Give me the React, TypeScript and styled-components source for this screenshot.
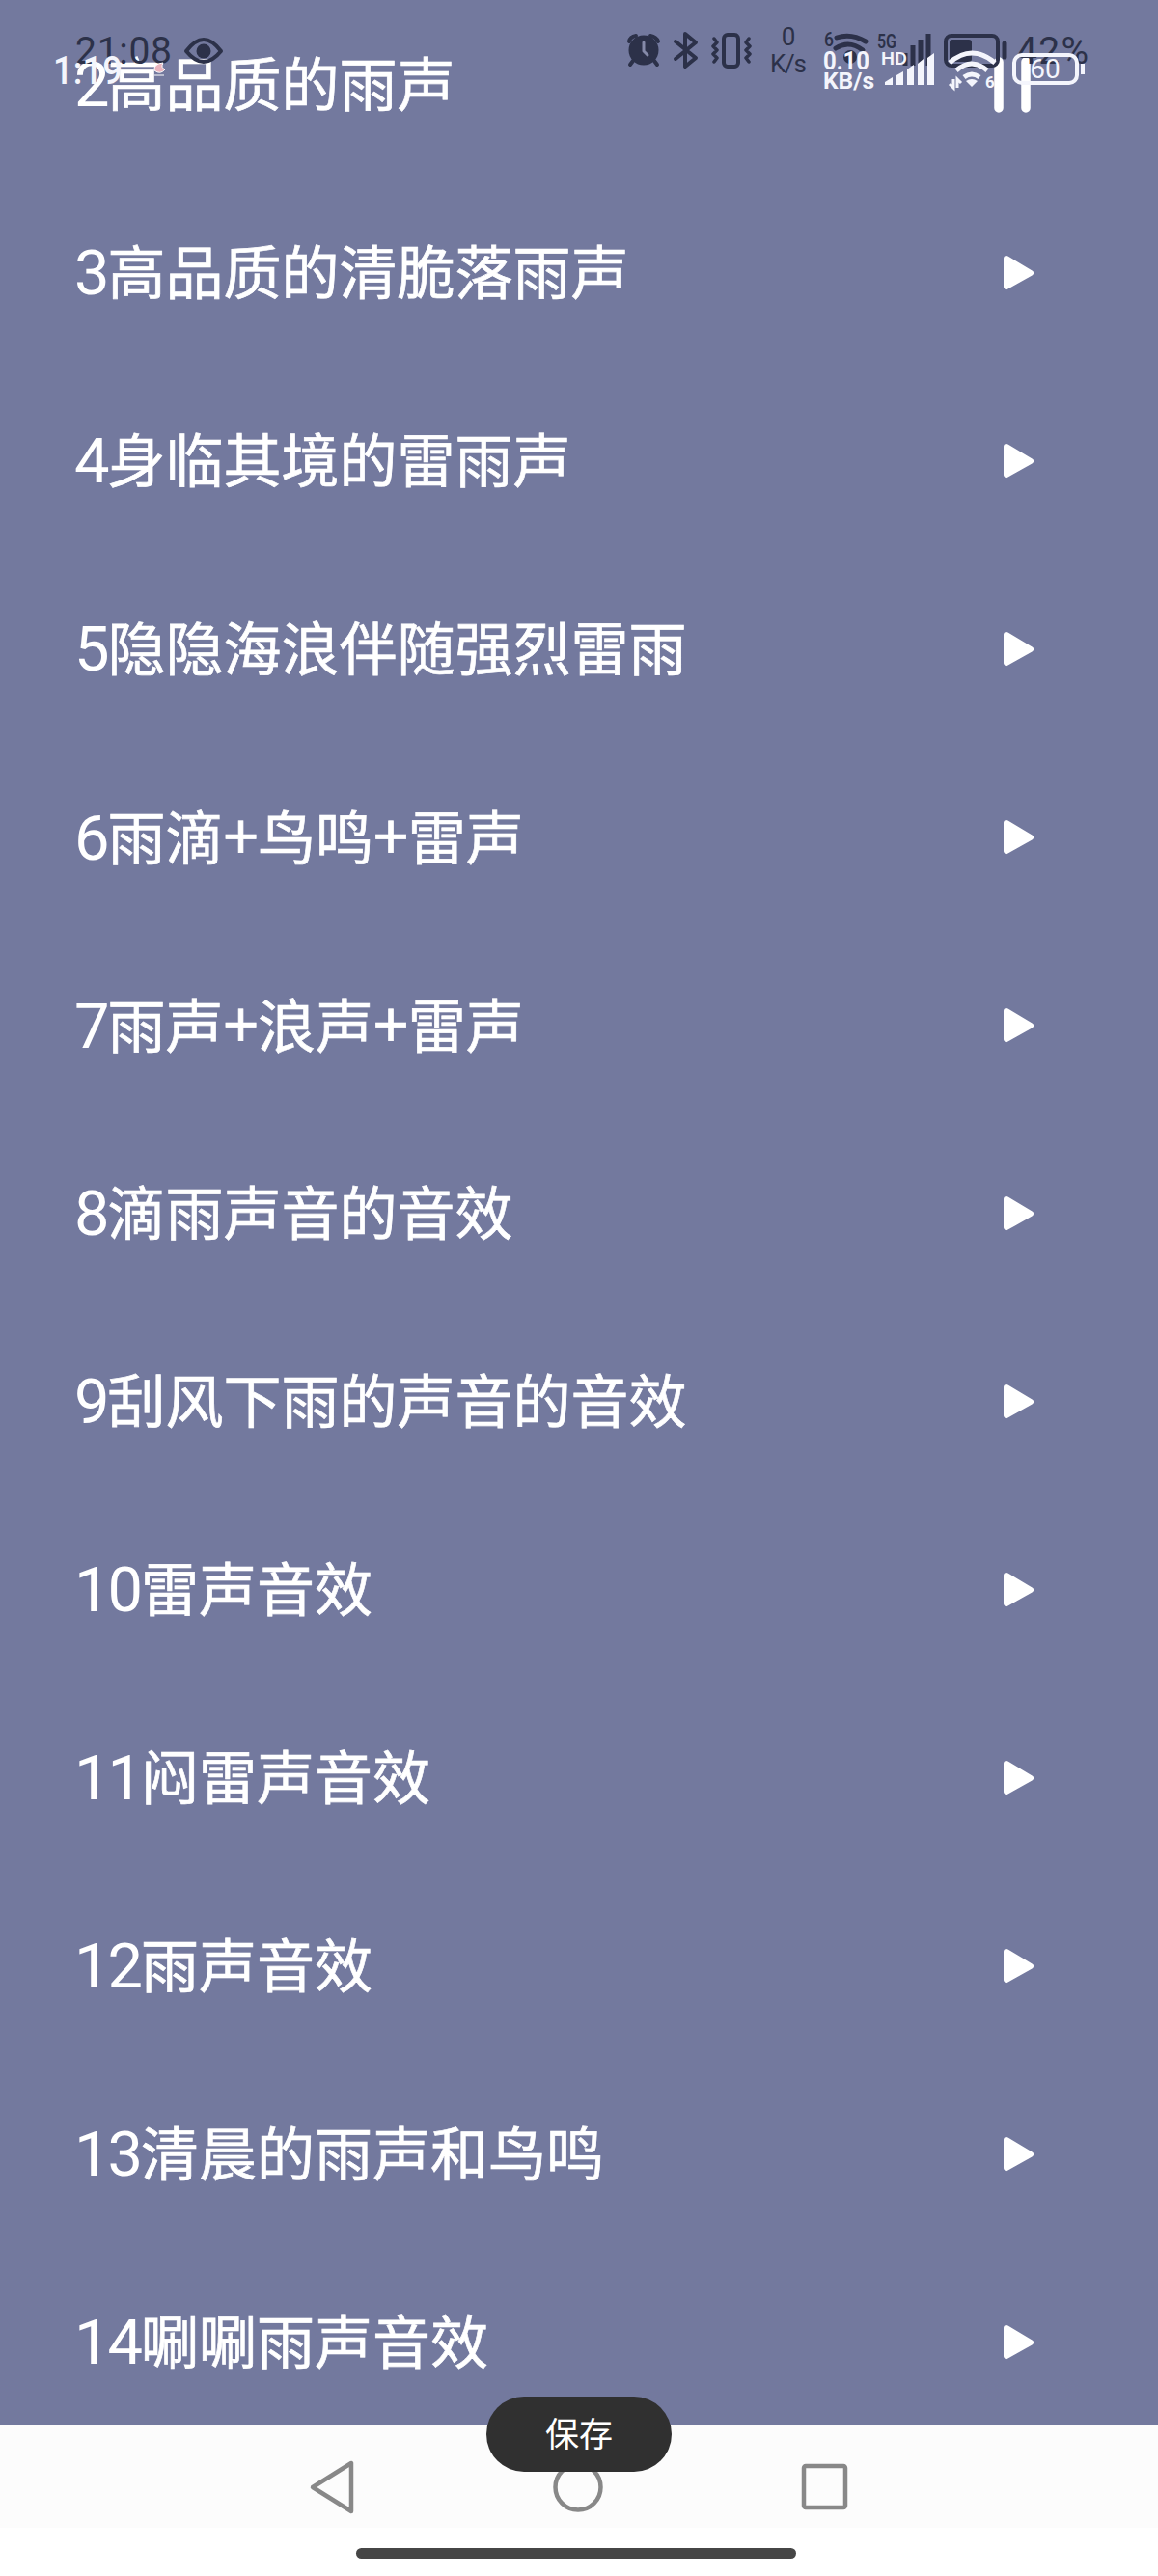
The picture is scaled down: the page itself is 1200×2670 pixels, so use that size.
import React from 'react';
import styled, { createGlobalStyle } from 'styled-components';

const Global = createGlobalStyle`
  * { box-sizing: border-box; }
  body { margin: 0; background: #fff; }
`;

const Screen = styled.div`
  position: relative;
  width: 1200px;
  height: 2670px;
  display: flex;
  flex-direction: column;
  overflow: hidden;
  background: #fff;
  font-family: Roboto, 'Noto Sans CJK SC', sans-serif;
`;

const ListPane = styled.main`
  height: 2513px;
  flex: none;
  overflow: hidden;
  background: #73799e;
`;

const Tracks = styled.ul`
  list-style: none;
  padding: 0;
  margin: -10px 0 0;
`;

const Track = styled.li`
  height: 195px;
  padding: 0 126px 0 77px;
  display: flex;
  align-items: center;
  justify-content: space-between;
  color: #fff;
`;

const Title = styled.span`
  font: 400 60px/90px 'Noto Sans CJK SC', sans-serif;
  padding-bottom: 4px;
  white-space: nowrap;
  -webkit-text-stroke: 0.7px #fff;
`;

const Digits = styled.span`
  font: 400 65px/90px Roboto, sans-serif;
  letter-spacing: -2px;
  -webkit-text-stroke: 0;
`;

const Plus = styled.span`
  font: 400 65px/90px 'Noto Sans CJK SC', sans-serif;
  letter-spacing: -0.5px;
`;

const StatusLayer = styled.svg`
  position: absolute;
  left: 0;
  top: 0;
`;

const NavBar = styled.nav`
  height: 107px;
  flex: none;
  display: flex;
  align-items: center;
  justify-content: space-between;
  padding: 23px 320px 0 320px;
  background: #fcfcfc;
`;

const HomeArea = styled.div`
  flex: 1;
  display: flex;
  justify-content: center;
  padding: 21px 6px 0 0;
`;

const HomeIndicator = styled.div`
  width: 456px;
  height: 11px;
  border-radius: 6px;
  background: #464646;
`;

const SaveToast = styled.button`
  position: absolute;
  left: 504px;
  top: 2484px;
  width: 192px;
  height: 78px;
  border: 0;
  padding: 0 0 4px;
  border-radius: 39px;
  background: #303030;
  color: #fff;
  font: 400 35px/50px 'Noto Sans CJK SC', sans-serif;
`;

const tracks = [
  '2高品质的雨声',
  '3高品质的清脆落雨声',
  '4身临其境的雷雨声',
  '5隐隐海浪伴随强烈雷雨',
  '6雨滴+鸟鸣+雷声',
  '7雨声+浪声+雷声',
  '8滴雨声音的音效',
  '9刮风下雨的声音的音效',
  '10雷声音效',
  '11闷雷声音效',
  '12雨声音效',
  '13清晨的雨声和鸟鸣',
  '14唰唰雨声音效',
];

const TrackTitle = ({ text }: { text: string }) => (
  <Title>
    {text.split(/([0-9]+|\+)/).filter(Boolean).map((part, i) => {
      if (part === '+') return <Plus key={i}>+</Plus>;
      return /^[0-9]/.test(part) ? <Digits key={i}>{part}</Digits> : part;
    })}
  </Title>
);

const PlayIcon = () => (
  <svg width="36" height="40" viewBox="0 0 36 40">
    <path d="M5 5 L30 20 L5 34Z" fill="#fff" stroke="#fff" strokeWidth="6" strokeLinejoin="round" />
  </svg>
);

const PauseIcon = () => (
  <svg width="44" height="58" viewBox="0 0 44 58">
    <path d="M5 5V53M33 5V53" stroke="#fff" strokeWidth="9.5" strokeLinecap="round" />
  </svg>
);

const dark = '#2c3149';
const light = '#f4f5fc';

const StatusIcons = () => (
  <StatusLayer width="1200" height="130" viewBox="0 0 1200 130" fill="none">
    <g fontFamily="Roboto, sans-serif" fill={dark}>
      <text x="78" y="66" fontSize="39" textLength="100">21:08</text>
      <text x="817" y="47" fontSize="26" textAnchor="middle">0</text>
      <text x="817" y="75" fontSize="26" textAnchor="middle" textLength="38">K/s</text>
      <text x="854" y="48" fontSize="21" fontWeight="500" textLength="10" lengthAdjust="spacingAndGlyphs">6</text>
      <text x="909" y="50" fontSize="21" fontWeight="600" textLength="20" lengthAdjust="spacingAndGlyphs">5G</text>
      <text x="1053" y="66" fontSize="39" textLength="75">42%</text>
    </g>
    <g stroke={dark} strokeWidth="4" strokeLinecap="round" strokeLinejoin="round">
      <path d="M193 53Q211 29 229 53Q211 75 193 53Z" />
      <circle cx="211" cy="53" r="7.5" fill={dark} stroke="none" />
      <circle cx="667" cy="52" r="15.5" fill={dark} stroke="none" />
      <path d="M652 43Q653 38 659 37M682 43Q680 38 674 37M656 63L653 67M678 63L681 67" />
      <path d="M667 44V53L671 57" stroke="#858aa9" strokeWidth="3" />
      <path d="M700 43L721 60L710 69V35L721 44L700 61" />
      <rect x="750" y="36" width="15" height="33" rx="4" />
      <path d="M740 40L743 44L739 48L743 52L739 56L743 60L740 64M776 40L773 44L777 48L773 52L777 56L773 60L776 64" strokeWidth="3.5" />
      <path d="M867 39Q882 34 897 43M866 50Q880 41 894 52" strokeWidth="5" />
      <circle cx="881" cy="59" r="7" fill={dark} stroke="none" />
      <path d="M938 68V55M946 68V47M954 68V41M962 68V35" strokeWidth="5" strokeLinecap="butt" />
      <rect x="980" y="37" width="54" height="31" rx="6" />
      <path d="M1041 45V59" strokeWidth="5" />
      <rect x="984" y="41" width="23" height="23" rx="3" fill={dark} stroke="none" />
    </g>
    <g fontFamily="Roboto, sans-serif" fill={light}>
      <text x="55" y="87" fontSize="41" fontWeight="500" textLength="72" lengthAdjust="spacingAndGlyphs">1:19</text>
      <text x="853" y="72" fontSize="25" fontWeight="700" textLength="48" lengthAdjust="spacingAndGlyphs">0.10</text>
      <text x="853" y="92" fontSize="24" fontWeight="700" textLength="53" lengthAdjust="spacingAndGlyphs">KB/s</text>
      <text x="913" y="67" fontSize="18" fontWeight="600" textLength="27" lengthAdjust="spacingAndGlyphs">HD</text>
      <text x="1021" y="91" fontSize="17" fontWeight="700">6</text>
      <text x="1083" y="81" fontSize="28" textAnchor="middle">60</text>
    </g>
    <path
      d="M917 88V85L925 80V88ZM929 88V78L936 74V88ZM940 88V72L947 67V88ZM951 88V66L957 61V88ZM961 88V60L968 55V88Z"
      fill={light}
    />
    <g stroke={light} strokeWidth="6">
      <path d="M984 65Q1007 45 1031 65M991 73Q1007 59 1023 73M999 80Q1007 74 1015 80" strokeWidth="5" />
      <path d="M1001 84Q1007 80 1013 84L1007 90Z" fill={light} stroke="none" />
      <path d="M988 82V91L984 87M992 91V82L996 86" strokeWidth="3" />
      <rect x="1051" y="57" width="65" height="29" rx="8" strokeWidth="4" />
      <path d="M1122 66V77" strokeWidth="4" />
    </g>
    <path d="M169 65Q159 66 160 73Q166 78 171 72Q166 70 169 65ZM160 78H170" stroke="#fff" fill="#e9b3bd" />
  </StatusLayer>
);

export default function App() {
  return (
    <Screen>
      <Global />
      <ListPane>
        <Tracks>
          {tracks.map((text, i) => (
            <Track key={text}>
              <TrackTitle text={text} />
              {i === 0 ? <PauseIcon /> : <PlayIcon />}
            </Track>
          ))}
        </Tracks>
      </ListPane>
      <StatusIcons />
      <NavBar>
        <svg width="50" height="58" viewBox="0 0 50 58" fill="none" stroke="#888" strokeWidth="4.5" strokeLinejoin="round">
          <path d="M44 4V54L4 29Z" />
        </svg>
        <svg width="56" height="56" viewBox="0 0 56 56" fill="none" stroke="#888" strokeWidth="4.5">
          <circle cx="27" cy="28" r="23.5" />
        </svg>
        <svg width="50" height="50" viewBox="0 0 50 50" fill="none" stroke="#888" strokeWidth="4.5">
          <rect x="3" y="3" width="43" height="43" rx="2" />
        </svg>
      </NavBar>
      <HomeArea>
        <HomeIndicator />
      </HomeArea>
      <SaveToast>保存</SaveToast>
    </Screen>
  );
}
